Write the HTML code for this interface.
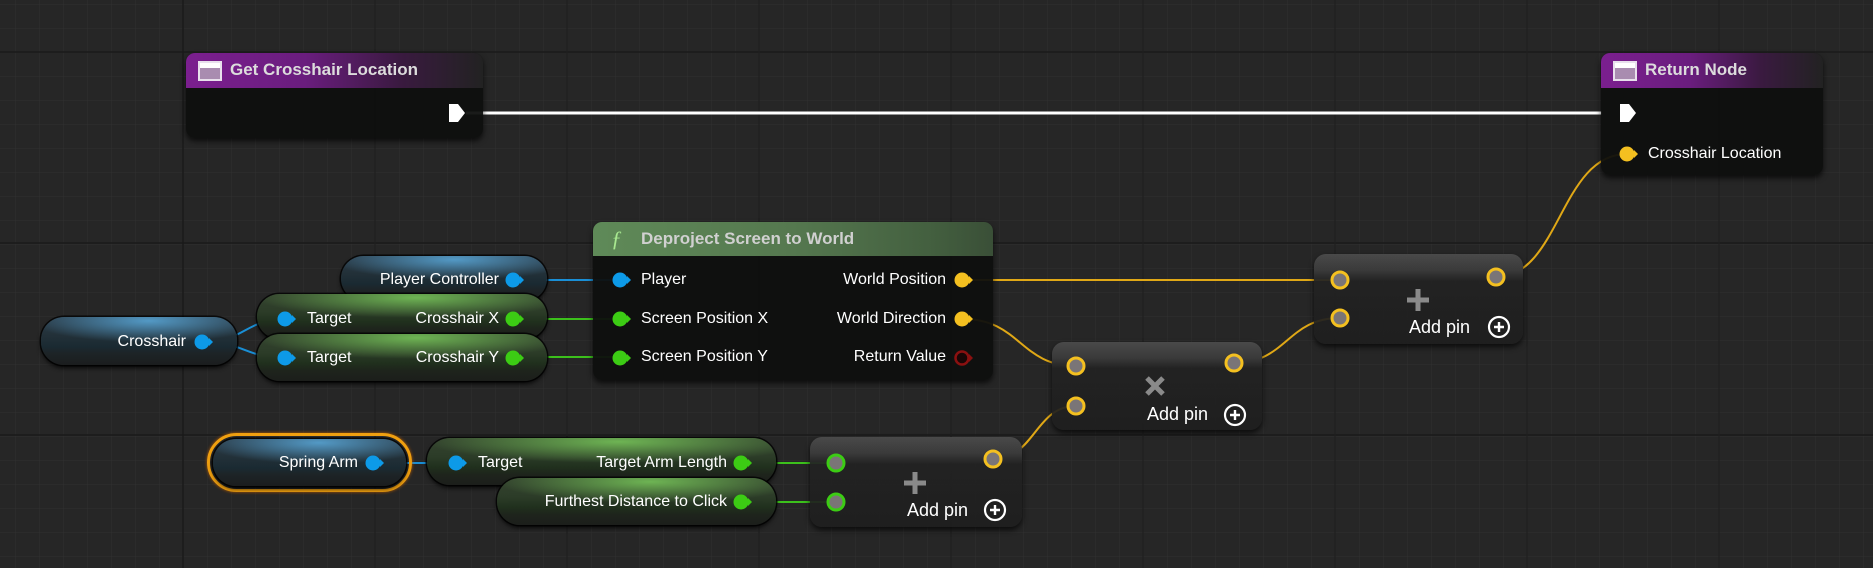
<!DOCTYPE html>
<html><head><meta charset="utf-8"><style>
*{margin:0;padding:0;box-sizing:border-box}
body{width:1873px;height:568px;overflow:hidden;background:#262626;font-family:"Liberation Sans",sans-serif;position:relative}
svg.bg{position:absolute;left:0;top:0}
.n{position:absolute;border-radius:9px;box-shadow:0 3px 6px rgba(0,0,0,.7)}
.std{background:rgba(14,15,14,.95)}
.hdr{position:absolute;left:0;top:0;right:0;border-radius:9px 9px 0 0;color:#dcdcdc;font-weight:bold;font-size:17px;line-height:34px;padding-left:46px;white-space:nowrap}
.purp{background:linear-gradient(90deg,#7b1f8f 0%,#6a1d7e 40%,#3a1a40 72%,#222 100%)}
.grn{background:linear-gradient(90deg,#5f8a58 0%,#55784f 50%,#435f3f 85%,#3a4f37 100%)}
.ico{position:absolute;left:12px;top:8px;width:24px;height:20px;border:2px solid #e8e0ec;background:linear-gradient(#fff 0 5px,#a98cb0 5px)}
.t{position:absolute;color:#fff;font-size:16px;white-space:nowrap;line-height:20px}
.pill{position:absolute;border-radius:23px;box-shadow:0 3px 5px rgba(0,0,0,.8),0 0 0 1.5px rgba(0,0,0,.75)}
.blue{background:radial-gradient(ellipse 60% 45% at 55% 8%,rgba(90,170,220,.85),rgba(60,130,180,0) 100%),linear-gradient(180deg,#2c3c48 0%,#223038 40%,#1a2a32 62%,#1d2427 75%,#1b1d1e 100%)}
.green{background:radial-gradient(ellipse 55% 45% at 55% 8%,rgba(120,200,90,.85),rgba(80,150,60,0) 100%),linear-gradient(180deg,#34432f 0%,#2c3c28 40%,#20301d 62%,#1e241c 78%,#1c1e1b 100%)}
.math{position:absolute;border-radius:12px;background:linear-gradient(180deg,#4a4a4a 0%,#3a3a3a 18%,#2a2a2a 26%,rgba(34,34,34,.92) 30%,rgba(30,30,30,.92) 100%);box-shadow:0 3px 6px rgba(0,0,0,.7)}
.ap{position:absolute;color:#fff;font-size:18px;white-space:nowrap}
</style></head><body>
<svg class="bg" width="1873" height="568">
<defs>
<pattern id="g" x="15" y="4" width="24" height="24" patternUnits="userSpaceOnUse">
<path d="M0 0H24M0 0V24" stroke="#303030" stroke-width="1"/>
</pattern>
</defs>
<rect width="1873" height="568" fill="#262626"/>
<rect width="1873" height="568" fill="url(#g)"/>
<g stroke="#1a1a1a" stroke-width="1.5">
<path d="M183 0V568M0 52H1873M0 243H1873M0 435H1873"/>
</g>
<g stroke="#1f1f1f" stroke-width="1.2"><path d="M375 0V568M567 0V568M759 0V568M951 0V568M1143 0V568M1335 0V568M1527 0V568M1719 0V568"/></g>
<path d="M466 113H1602" stroke="#fff" stroke-width="3"/>
<g fill="none" stroke-width="2">
<path d="M514 280H619" stroke="#1a8fd6"/>
<path d="M203 342C245 342,245 319,286 319M203 342C245 342,245 358,286 358" stroke="#1a8fd6"/>
<path d="M374 463H456" stroke="#1a8fd6"/>
<path d="M514 319H619M514 357H619" stroke="#3cc01c"/>
<path d="M742 463H836M742 502H836" stroke="#3cc01c"/>
<path d="M963 280H1340" stroke="#e0a816"/>
<path d="M963 319C1020 319,1020 366,1076 366" stroke="#e0a816"/>
<path d="M1234 363C1287 363,1287 318,1340 318" stroke="#e0a816"/>
<path d="M993 459C1035 459,1035 406,1076 406" stroke="#e0a816"/>
<path d="M1496 277C1560 277,1560 154,1627 154" stroke="#e0a816"/>
</g>
</svg>

<div class="n std" style="left:186px;top:53px;width:297px;height:85px">
<div class="hdr purp" style="height:35px;padding-left:44px">Get Crosshair Location<div class="ico"></div></div>
</div>
<svg style="position:absolute;left:447px;top:103px" width="20" height="20"><path d="M2 1H11L18 10L11 19H2Z" fill="#fff"/></svg>

<div class="n std" style="left:1601px;top:53px;width:222px;height:122px">
<div class="hdr purp" style="height:35px;padding-left:44px">Return Node<div class="ico"></div></div>
<div class="t" style="left:47px;top:91px">Crosshair Location</div>
</div>
<svg style="position:absolute;left:1618px;top:103px" width="20" height="20"><path d="M2 1H11L18 10L11 19H2Z" fill="#fff"/></svg>

<div class="n std" style="left:593px;top:222px;width:400px;height:158px">
<div class="hdr grn" style="height:34px;padding-left:48px;font-size:17px;line-height:34px;color:#d0d0d0">Deproject Screen to World<span style="position:absolute;left:18px;top:0;color:#a8e890;font-style:italic;font-weight:normal;font-family:'Liberation Serif',serif;font-size:22px">ƒ</span></div>
<div class="t" style="left:48px;top:48px">Player</div>
<div class="t" style="left:48px;top:87px">Screen Position X</div>
<div class="t" style="left:48px;top:125px">Screen Position Y</div>
<div class="t" style="right:47px;top:48px">World Position</div>
<div class="t" style="right:47px;top:87px">World Direction</div>
<div class="t" style="right:47px;top:125px">Return Value</div>
</div>

<div class="pill blue" style="left:341px;top:256px;width:206px;height:45px"><div class="t" style="right:48px;top:14px">Player Controller</div></div>
<div class="pill green" style="left:257px;top:294px;width:290px;height:45px"><div class="t" style="left:50px;top:15px">Target</div><div class="t" style="right:48px;top:15px">Crosshair X</div></div>
<div class="pill green" style="left:257px;top:334px;width:290px;height:47px"><div class="t" style="left:50px;top:14px">Target</div><div class="t" style="right:48px;top:14px">Crosshair Y</div></div>
<div class="pill blue" style="left:41px;top:317px;width:196px;height:48px"><div class="t" style="right:51px;top:15px">Crosshair</div></div>
<div style="position:absolute;left:207px;top:433px;width:205px;height:59px;border-radius:30px;border:3.5px solid #f0a010;box-shadow:0 0 3px #c06000"></div>
<div class="pill blue" style="left:213px;top:439px;width:193px;height:47px"><div class="t" style="right:48px;top:14px">Spring Arm</div></div>
<div class="pill green" style="left:427px;top:438px;width:349px;height:47px"><div class="t" style="left:51px;top:15px">Target</div><div class="t" style="right:49px;top:15px">Target Arm Length</div></div>
<div class="pill green" style="left:497px;top:478px;width:279px;height:47px"><div class="t" style="right:49px;top:14px">Furthest Distance to Click</div></div>

<div class="math" style="left:810px;top:437px;width:212px;height:90px"><div class="ap" style="left:97px;top:63px">Add pin</div></div>
<div class="math" style="left:1052px;top:342px;width:210px;height:88px"><div class="ap" style="left:95px;top:62px">Add pin</div></div>
<div class="math" style="left:1314px;top:254px;width:209px;height:90px"><div class="ap" style="left:95px;top:63px">Add pin</div></div>

<svg style="position:absolute;left:0;top:0" width="1873" height="568">
<defs>
<g id="pb"><circle r="7.5" fill="#0d9ae8"/><path d="M7 -4L11 0L7 4Z" fill="#0d9ae8"/></g>
<g id="pg"><circle r="7.5" fill="#3ccc14"/><path d="M7 -4L11 0L7 4Z" fill="#3ccc14"/></g>
<g id="py"><circle r="7.5" fill="#f4c020"/><path d="M7 -4L11 0L7 4Z" fill="#f4c020"/></g>
<g id="hy"><circle r="8" fill="#7a7577" stroke="#f4c020" stroke-width="3"/></g>
<g id="hg"><circle r="8" fill="#7a7577" stroke="#3ccc14" stroke-width="3"/></g>
<g id="cp"><circle r="10" fill="none" stroke="#fff" stroke-width="2.2"/><path d="M-5 0H5M0 -5V5" stroke="#fff" stroke-width="2.4"/></g>
</defs>
<use href="#pb" x="620" y="280"/><use href="#pg" x="620" y="319"/><use href="#pg" x="620" y="358"/>
<use href="#py" x="962" y="280"/><use href="#py" x="962" y="319"/>
<g transform="translate(962 358)"><circle r="6.5" fill="#1a0606" stroke="#8a1010" stroke-width="2.5"/><path d="M7 -4L11 0L7 4Z" fill="#8a1010"/></g>
<use href="#py" x="1627" y="154"/>
<use href="#pb" x="513" y="280"/><use href="#pg" x="513" y="319"/><use href="#pg" x="513" y="358"/>
<use href="#pb" x="285" y="319"/><use href="#pb" x="285" y="358"/>
<use href="#pb" x="202" y="342"/>
<use href="#pb" x="373" y="463"/><use href="#pb" x="456" y="463"/>
<use href="#pg" x="741" y="463"/><use href="#pg" x="741" y="502"/>
<use href="#hg" x="836" y="463"/><use href="#hg" x="836" y="502"/><use href="#hy" x="993" y="459"/>
<use href="#hy" x="1076" y="366"/><use href="#hy" x="1076" y="406"/><use href="#hy" x="1234" y="363"/>
<use href="#hy" x="1340" y="280"/><use href="#hy" x="1340" y="318"/><use href="#hy" x="1496" y="277"/>
<use href="#cp" x="995" y="510"/><use href="#cp" x="1235" y="415"/><use href="#cp" x="1499" y="327"/>
<path d="M915 472V494M904 483H926" stroke="#8a8a8a" stroke-width="5"/>
<path d="M1418 289V311M1407 300H1429" stroke="#8a8a8a" stroke-width="5"/>
<path d="M1147 378L1163 394M1163 378L1147 394" stroke="#8a8a8a" stroke-width="5"/>
</svg>
</body></html>
